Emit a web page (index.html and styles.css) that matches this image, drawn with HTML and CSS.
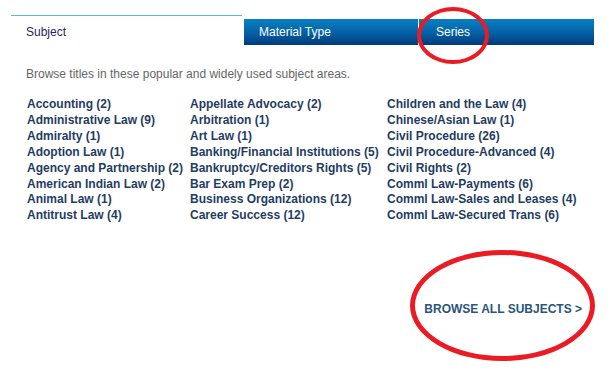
FILE: index.html
```html
<!DOCTYPE html>
<html>
<head>
<meta charset="utf-8">
<link rel="stylesheet" href="styles.css">
</head>
<body>
<div class="page">
  <div class="tabs">
    <div class="tab tab-active">Subject</div>
    <div class="tab tab-blue tab-material">Material Type</div>
    <div class="tab tab-blue tab-series">Series</div>
  </div>
  <p class="intro">Browse titles in these popular and widely used subject areas.</p>
  <div class="grid">
    <ul class="col col1">
      <li>Accounting (2)</li>
      <li>Administrative Law (9)</li>
      <li>Admiralty (1)</li>
      <li>Adoption Law (1)</li>
      <li>Agency and Partnership (2)</li>
      <li>American Indian Law (2)</li>
      <li>Animal Law (1)</li>
      <li>Antitrust Law (4)</li>
    </ul>
    <ul class="col col2">
      <li>Appellate Advocacy (2)</li>
      <li>Arbitration (1)</li>
      <li>Art Law (1)</li>
      <li>Banking/Financial Institutions (5)</li>
      <li>Bankruptcy/Creditors Rights (5)</li>
      <li>Bar Exam Prep (2)</li>
      <li>Business Organizations (12)</li>
      <li>Career Success (12)</li>
    </ul>
    <ul class="col col3">
      <li>Children and the Law (4)</li>
      <li>Chinese/Asian Law (1)</li>
      <li>Civil Procedure (26)</li>
      <li>Civil Procedure-Advanced (4)</li>
      <li>Civil Rights (2)</li>
      <li>Comml Law-Payments (6)</li>
      <li>Comml Law-Sales and Leases (4)</li>
      <li>Comml Law-Secured Trans (6)</li>
    </ul>
  </div>
  <div class="browse-row"><a class="browse">BROWSE ALL SUBJECTS &gt;</a></div>
  <div class="ring ring-series"></div>
  <div class="ring ring-browse"></div>
</div>
</body>
</html>
```
FILE: styles.css
```css
html, body {
  margin: 0;
  padding: 0;
  background: #fff;
}
.page {
  position: relative;
  width: 616px;
  height: 377px;
  font-family: "Liberation Sans", Arial, sans-serif;
  font-size: 12px;
  overflow: hidden;
}
.tabs {
  display: flex;
  align-items: flex-end;
  padding: 15px 0 0 11px;
  height: 30px;
}
.tab {
  box-sizing: border-box;
  line-height: 14px;
}
.tab-active {
  width: 231px;
  height: 30px;
  border-top: 1px solid #62b9cf;
  color: #2a1f5c;
  padding: 9px 0 0 15px;
}
.tab-blue {
  height: 26px;
  background: linear-gradient(#0a80c4, #0563a8 50%, #013b7a);
  color: #fff;
  padding: 6px 0 0 15px;
}
.tab-material {
  margin-left: 2px;
  width: 175px;
  border-right: 1px solid #fff;
}
.tab-series {
  width: 175px;
  padding-left: 17px;
}
.intro {
  margin: 22px 0 0 26px;
  color: #666;
  line-height: 14px;
}
.grid {
  display: flex;
  margin-top: 16px;
  padding-left: 27px;
}
.col {
  list-style: none;
  margin: 0;
  padding: 0;
  font-weight: bold;
  color: #1f3d63;
  line-height: 15.9px;
}
.col1 { width: 163px; }
.col2 { width: 197px; }
.browse-row {
  display: flex;
  justify-content: flex-end;
  padding-right: 34px;
  margin-top: 78px;
}
.browse {
  font-weight: bold;
  color: #2b5579;
  line-height: 14px;
}
.ring {
  position: absolute;
  box-sizing: border-box;
  border-radius: 50%;
  border: 4px solid #ea1b23;
}
.ring-series {
  left: 417px;
  top: 7px;
  width: 72px;
  height: 57px;
}
.ring-browse {
  left: 410px;
  top: 250px;
  width: 185px;
  height: 111px;
  border-width: 5px;
}
```
